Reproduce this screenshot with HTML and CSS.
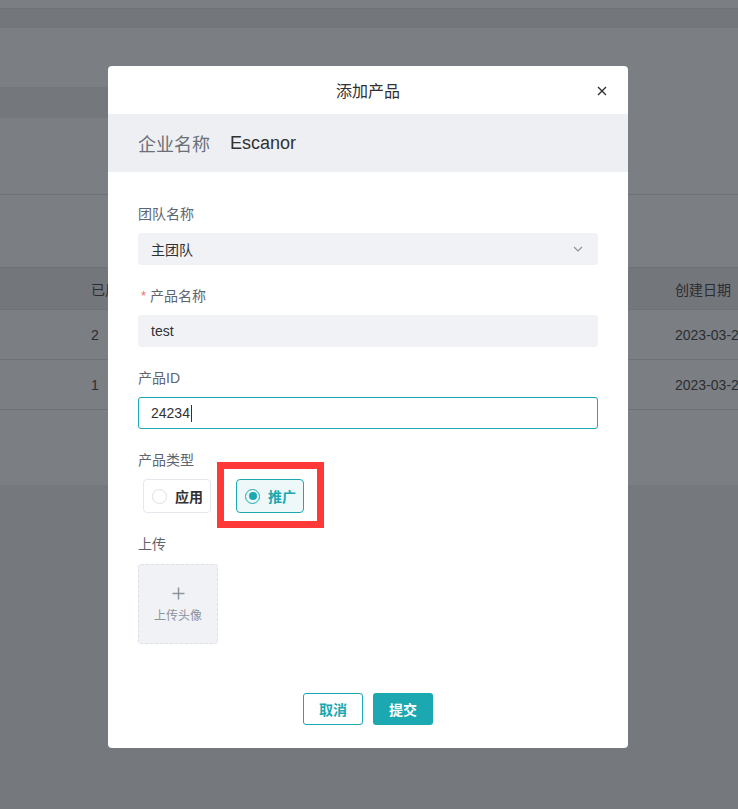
FILE: index.html
```html
<!DOCTYPE html>
<html lang="zh">
<head>
<meta charset="utf-8">
<title>添加产品</title>
<link rel="stylesheet" href="styles.css">
</head>
<body>
<div class="page">
  <div class="bg-top"></div>
  <div class="bg-bar"></div>
  <div class="bg-light h59"></div>
  <div class="bg-tabrow"><div class="bg-tab"></div></div>
  <div class="bg-light h77 line-b"></div>
  <div class="bg-light h72 line-b"></div>
  <div class="tbl">
    <div class="tr th"><span class="c1">已用</span><span class="c2">次数</span><span class="c3">创建日期</span></div>
    <div class="tr"><span class="c1">2</span><span class="c2">3</span><span class="c3">2023-03-21</span></div>
    <div class="tr"><span class="c1">1</span><span class="c2">2</span><span class="c3">2023-03-21</span></div>
  </div>
  <div class="bg-light h75"></div>
  <div class="bg-bottom"></div>
</div>

<div class="modal">
  <div class="m-head">
    <span class="m-title">添加产品</span>
    <svg class="m-close" width="10" height="10" viewBox="0 0 10 10"><path d="M1 1L9 9M9 1L1 9" stroke="#303133" stroke-width="1.4" fill="none"/></svg>
  </div>
  <div class="m-band"><span class="band-k">企业名称</span><span class="band-v">Escanor</span></div>
  <div class="m-body">
    <div class="lbl">团队名称</div>
    <div class="field sel"><span>主团队</span>
      <svg width="10" height="6" viewBox="0 0 10 6"><path d="M1 1L5 5L9 1" stroke="#909399" stroke-width="1.2" fill="none"/></svg>
    </div>
    <div class="lbl gap"><span class="req">*</span>产品名称</div>
    <div class="field">test</div>
    <div class="lbl gap">产品ID</div>
    <div class="field focus">24234<span class="caret"></span></div>
    <div class="lbl gap">产品类型</div>
    <div class="radios">
      <div class="radio"><span class="dot"></span>应用</div>
      <div class="radio on"><span class="dot"></span>推广</div>
      <div class="mark"></div>
    </div>
    <div class="lbl gap2">上传</div>
    <div class="upload">
      <svg width="13" height="13" viewBox="0 0 13 13"><path d="M6.5 0.5V12.5M0.5 6.5H12.5" stroke="#8c939d" stroke-width="1.5" fill="none"/></svg>
      <span>上传头像</span>
    </div>
  </div>
  <div class="m-foot">
    <div class="btn ghost">取消</div>
    <div class="btn primary">提交</div>
  </div>
</div>
</body>
</html>
```
FILE: styles.css
```css
* { box-sizing: border-box; }
html, body { margin: 0; padding: 0; }
body {
  width: 738px;
  height: 809px;
  overflow: hidden;
  position: relative;
  font-family: "Liberation Sans", "Noto Sans CJK SC", sans-serif;
  background: #75787d;
}
.page { display: flex; flex-direction: column; }
.bg-top { height: 8px; background: #7b7e83; }
.bg-bar { height: 20px; background: #73767b; border-top: 1px solid #6f7277; }
.bg-light { background: #7b7e83; }
.h59 { height: 59px; }
.h77 { height: 77px; }
.h72 { height: 73px; }
.h75 { height: 75px; }
.line-b { border-bottom: 1px solid #6e7176; }
.bg-tabrow { height: 31px; background: #7b7e83; }
.bg-tab { width: 300px; height: 31px; background: #74777c; }
.tbl { display: flex; flex-direction: column; background: #7b7e83; }
.tr {
  height: 50px;
  display: flex;
  align-items: center;
  border-bottom: 1px solid #6e7176;
  font-size: 14px;
  color: #2b2d31;
  white-space: nowrap;
  overflow: hidden;
}
.tr span { flex-shrink: 0; }
.tr.th { height: 42px; background: #73767b; }
.c1 { width: 291px; padding-left: 91px; }
.c2 { width: 384px; text-align: right; padding-right: 48px; }
.c3 { padding-left: 0; }
.bg-bottom { flex: 1; height: 323px; background: #75787d; }

.modal {
  position: absolute;
  left: 108px;
  top: 66px;
  width: 520px;
  height: 682px;
  background: #fff;
  border-radius: 4px;
  display: flex;
  flex-direction: column;
  overflow: hidden;
}
.m-head {
  height: 48px;
  display: flex;
  align-items: center;
  justify-content: center;
  position: relative;
}
.m-title { font-size: 16px; color: #303133; }
.m-close { position: absolute; right: 21px; top: 20px; }
.m-band {
  height: 58px;
  background: #eeeff3;
  display: flex;
  align-items: center;
  padding-left: 30px;
  font-size: 18px;
}
.band-k { color: #6b7079; margin-right: 20px; }
.band-v { color: #303133; }
.m-body {
  padding: 31px 30px 0;
  display: flex;
  flex-direction: column;
}
.lbl { font-size: 14px; line-height: 22px; color: #5e6470; display: flex; align-items: center; }
.lbl.gap { margin-top: 20px; }
.lbl.gap2 { margin-top: 20px; }
.req { color: #f56c6c; font-size: 13px; margin: 0 4px 0 3px; }
.field {
  margin-top: 8px;
  height: 32px;
  border-radius: 3px;
  background: #f1f2f5;
  padding: 0 13px;
  font-size: 14px;
  color: #303133;
  display: flex;
  align-items: center;
}
.sel { justify-content: space-between; padding-right: 15px; }
.focus { background: #fff; border: 1px solid #1ba8b0; padding-left: 12px; }
.caret { display: inline-block; width: 1px; height: 17px; background: #303133; margin-left: 1px; }
.radios {
  margin-top: 8px;
  display: flex;
  gap: 25px;
  padding-left: 5px;
  position: relative;
}
.radio {
  width: 68px;
  height: 34px;
  border: 1px solid #e4e7ed;
  border-radius: 4px;
  display: flex;
  align-items: center;
  padding-left: 8px;
  font-size: 14px;
  font-weight: bold;
  color: #303133;
}
.dot {
  width: 15px;
  height: 15px;
  border: 1px solid #dcdfe6;
  border-radius: 50%;
  margin-right: 8px;
  display: flex;
  align-items: center;
  justify-content: center;
}
.radio.on { border-color: #1ba8b0; background: #eef8f9; color: #1ba8b0; }
.radio.on .dot { border-color: #1ba8b0; }
.radio.on .dot::after {
  content: "";
  width: 8px;
  height: 8px;
  border-radius: 50%;
  background: #1ba8b0;
}
.mark {
  position: absolute;
  left: 79px;
  top: -17px;
  width: 107px;
  height: 66px;
  border: 7px solid #ff3838;
}
.upload {
  margin-top: 9px;
  width: 80px;
  height: 80px;
  border: 1px dashed #dcdfe6;
  border-radius: 3px;
  background: #f1f2f5;
  display: flex;
  flex-direction: column;
  align-items: center;
  padding-top: 22px;
  gap: 6px;
  font-size: 12px;
  color: #8c939d;
}
.m-foot {
  margin-top: auto;
  padding-bottom: 23px;
  display: flex;
  justify-content: center;
  gap: 10px;
}
.btn {
  width: 60px;
  height: 32px;
  border-radius: 3px;
  font-size: 14px;
  display: flex;
  align-items: center;
  justify-content: center;
  font-weight: bold;
}
.ghost { border: 1px solid #1ba8b0; color: #1ba8b0; background: #fff; }
.primary { background: #1ba8b0; color: #fff; }
```
